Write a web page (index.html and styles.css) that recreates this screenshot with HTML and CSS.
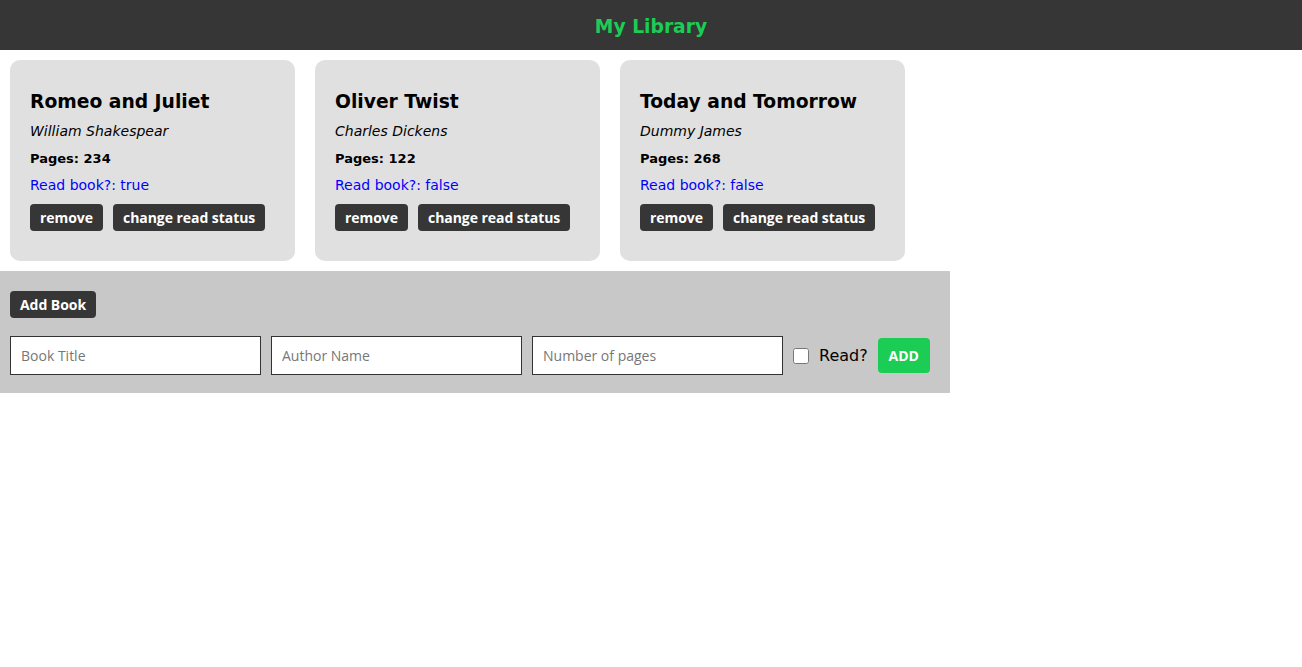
FILE: index.html
```html
<!DOCTYPE html>
<html>
<head>
<meta charset="utf-8">
<title>My Library</title>
<link rel="stylesheet" href="styles.css">
</head>
<body>
<header class="header"><h1 class="header-title">My Library</h1></header>
<main class="library">
  <div class="card">
    <h2 class="card-title">Romeo and Juliet</h2>
    <p class="card-author">William Shakespear</p>
    <p class="card-pages">Pages: 234</p>
    <p class="card-read">Read book?: true</p>
    <div class="card-actions"><button class="btn">remove</button><button class="btn">change read status</button></div>
  </div>
  <div class="card">
    <h2 class="card-title">Oliver Twist</h2>
    <p class="card-author">Charles Dickens</p>
    <p class="card-pages">Pages: 122</p>
    <p class="card-read">Read book?: false</p>
    <div class="card-actions"><button class="btn">remove</button><button class="btn">change read status</button></div>
  </div>
  <div class="card">
    <h2 class="card-title">Today and Tomorrow</h2>
    <p class="card-author">Dummy James</p>
    <p class="card-pages">Pages: 268</p>
    <p class="card-read">Read book?: false</p>
    <div class="card-actions"><button class="btn">remove</button><button class="btn">change read status</button></div>
  </div>
</main>
<section class="form-section">
  <button class="btn add-book">Add Book</button>
  <form class="book-form">
    <input class="field" type="text" placeholder="Book Title">
    <input class="field" type="text" placeholder="Author Name">
    <input class="field" type="text" placeholder="Number of pages">
    <label class="read-label"><input class="read-check" type="checkbox"> Read?</label>
    <button class="btn-add" type="button">ADD</button>
  </form>
</section>
</body>
</html>
```
FILE: styles.css
```css
* { box-sizing: border-box; }
body {
  margin: 0;
  font-family: "DejaVu Sans", sans-serif;
  color: #000;
  background: #fff;
}
.header {
  height: 50px;
  background: #363636;
  display: flex;
  align-items: center;
  justify-content: center;
  padding-top: 2px;
}
.header-title {
  margin: 0;
  font-size: 18.72px;
  font-weight: bold;
  color: #1ccd55;
}
.library {
  display: grid;
  grid-template-columns: repeat(3, 285px);
  gap: 20px;
  padding: 10px;
}
.card {
  background: #e0e0e0;
  border-radius: 10px;
  padding: 29px 20px 30px;
  height: 201px;
}
.card-title {
  margin: 0;
  font-size: 18.72px;
  line-height: 26px;
  font-weight: bold;
}
.card-author {
  margin: 7px 0 0;
  font-size: 14px;
  line-height: 18px;
  font-style: italic;
}
.card-pages {
  margin: 11px 0 0;
  font-size: 13px;
  line-height: 16px;
  font-weight: bold;
}
.card-read {
  margin: 9px 0 0;
  font-size: 14px;
  line-height: 18px;
  color: #0000ff;
}
.card-actions {
  display: flex;
  gap: 10px;
  margin-top: 10px;
}
.btn {
  font-family: "Open Sans", sans-serif;
  font-weight: bold;
  font-size: 14px;
  height: 27px;
  padding: 0 10px;
  border: none;
  border-radius: 4px;
  background: #363636;
  color: #fff;
  letter-spacing: -0.05px;
}
.form-section {
  width: 950px;
  background: #c8c8c8;
  padding: 20px 20px 18px 10px;
}
.add-book { display: block; }
.book-form {
  display: flex;
  align-items: center;
  gap: 10px;
  margin-top: 18px;
}
.field {
  width: 251px;
  height: 39px;
  border: 1px solid #333;
  background: #fff;
  padding: 0 10px;
  font-family: "Open Sans", sans-serif;
  font-size: 14px;
}
.field::placeholder { color: #777; }
.read-label {
  display: flex;
  align-items: center;
  gap: 9px;
  font-size: 16px;
}
.read-check {
  margin: 0 1px 0 0;
  width: 16px;
  height: 16px;
}
.btn-add {
  font-family: "Open Sans", sans-serif;
  font-weight: bold;
  font-size: 14px;
  width: 52px;
  height: 35px;
  border: none;
  border-radius: 4px;
  background: #1ccd55;
  color: #fff;
}
```
